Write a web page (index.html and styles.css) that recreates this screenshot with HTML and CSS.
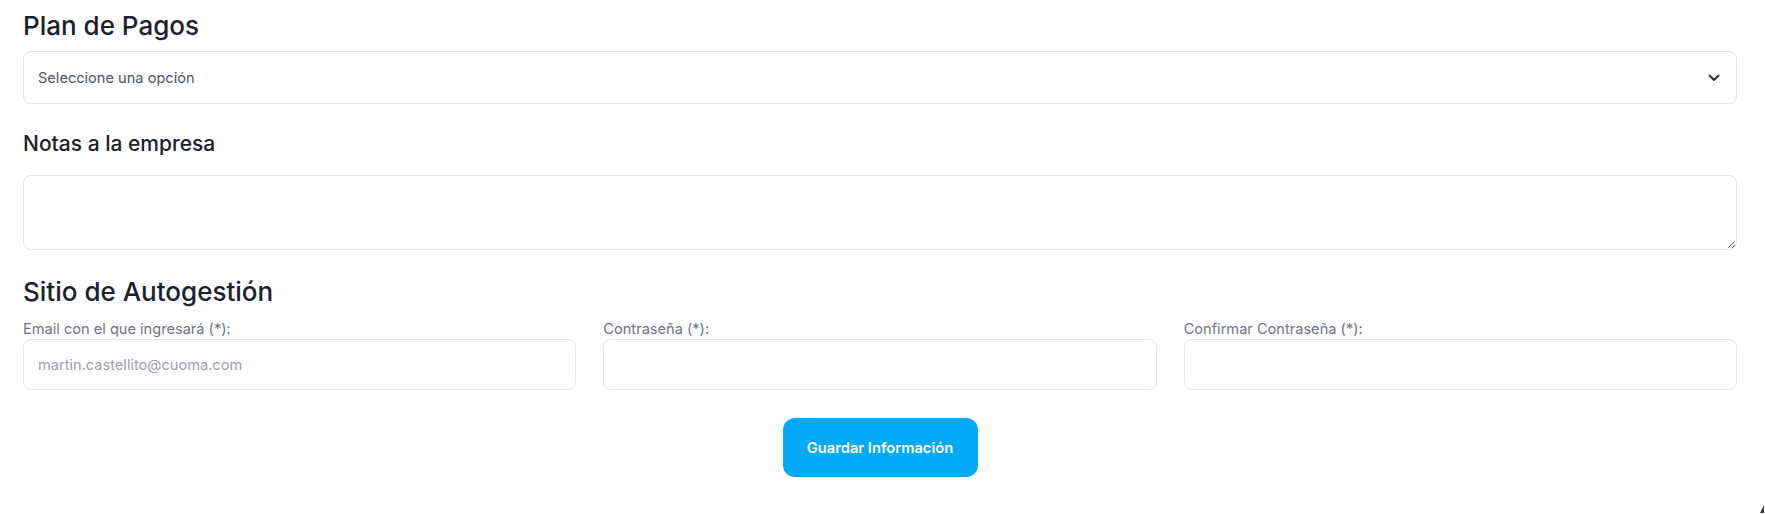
FILE: index.html
```html
<!DOCTYPE html>
<html lang="es">
<head>
<meta charset="utf-8">
<title>Plan de Pagos</title>
<link rel="stylesheet" href="styles.css">
</head>
<body>
<main class="page">
  <h2 class="title title-first">Plan de Pagos</h2>
  <div class="select">
    <span class="select-text">Seleccione una opción</span>
    <svg class="chevron" width="12" height="8" viewBox="0 0 12 8" aria-hidden="true"><path d="M1.5 1.5 L6 6 L10.5 1.5" fill="none" stroke="#1f2937" stroke-width="1.8" stroke-linecap="round" stroke-linejoin="round"/></svg>
  </div>

  <h3 class="subtitle">Notas a la empresa</h3>
  <textarea class="notes"></textarea>

  <h2 class="title title-site">Sitio de Autogestión</h2>
  <div class="grid">
    <div class="field">
      <label class="label">Email con el que ingresará (*):</label>
      <input class="input" type="text" placeholder="martin.castellito@cuoma.com">
    </div>
    <div class="field">
      <label class="label">Contraseña (*):</label>
      <input class="input" type="password">
    </div>
    <div class="field">
      <label class="label">Confirmar Contraseña (*):</label>
      <input class="input" type="password">
    </div>
  </div>

  <div class="actions">
    <button class="btn" type="button">Guardar Información</button>
  </div>
</main>
<div class="corner-grip" aria-hidden="true"></div>
</body>
</html>
```

FILE: styles.css
```css
* { box-sizing: border-box; }

html, body {
  margin: 0;
  padding: 0;
  background: #ffffff;
}

body {
  font-family: Inter, "Noto Sans", "Liberation Sans", sans-serif;
  color: #1c2430;
  width: 1765px;
  height: 515px;
  overflow: hidden;
  position: relative;
}

.page {
  padding: 10px 28px 0 23px;
}

.title {
  margin: 0;
  font-size: 26px;
  line-height: 31px;
  font-weight: 500;
  color: #1a202c;
}

.title-first { margin-bottom: 10px; }

.title-site { margin-top: 26px; }

.select {
  height: 53px;
  border: 1px solid #dfe2e7;
  border-radius: 8px;
  display: flex;
  align-items: center;
  justify-content: space-between;
  padding: 0 16px 0 14px;
}

.select-text {
  font-size: 14.6px;
  color: #4b5563;
}

.chevron { display: block; }

.subtitle {
  margin: 28px 0 19px;
  font-size: 21px;
  line-height: 24px;
  font-weight: 500;
  color: #1a202c;
}

.notes {
  display: block;
  width: 100%;
  height: 75px;
  border: 1px solid #dfe2e7;
  border-radius: 8px;
  resize: vertical;
  font-family: inherit;
  font-size: 14px;
  padding: 10px 14px;
  margin: 0;
}

.grid {
  margin-top: 12px;
  display: grid;
  grid-template-columns: repeat(3, 1fr);
  column-gap: 27px;
}

.field {
  display: flex;
  flex-direction: column;
}

.label {
  font-size: 14.6px;
  line-height: 20px;
  color: #6b7485;
}

.input {
  height: 51px;
  border: 1px solid #e2e5ea;
  border-radius: 8px;
  padding: 0 14px;
  font-family: inherit;
  font-size: 14.6px;
  color: #374151;
  margin: 0;
  outline: none;
}

.input::placeholder { color: #9aa1ab; }

.actions {
  display: flex;
  justify-content: center;
  margin-top: 28px;
}

.btn {
  width: 195px;
  height: 59px;
  border: none;
  border-radius: 12px;
  background: #03a9f4;
  color: #ffffff;
  font-family: inherit;
  font-size: 14.7px;
  font-weight: 600;
  cursor: pointer;
}

.corner-grip {
  position: absolute;
  right: 1px;
  bottom: 2px;
  width: 0;
  height: 0;
  border-left: 4px solid transparent;
  border-bottom: 8px solid #3a3a3a;
}
```
